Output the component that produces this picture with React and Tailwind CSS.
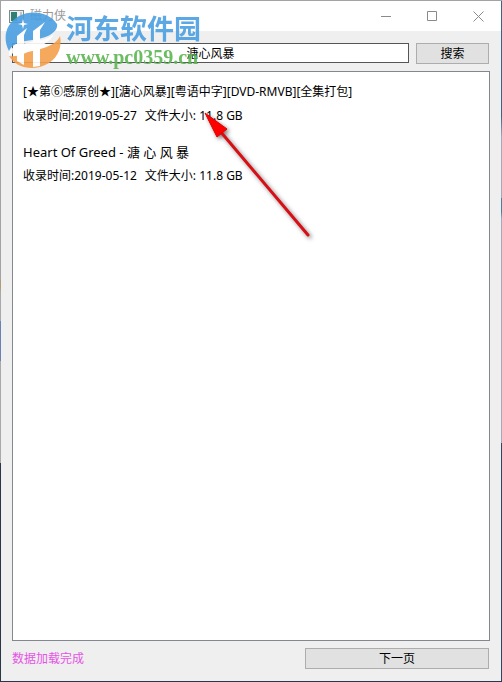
import { useState } from 'react';

const RESULTS = [
  { id: 1, title: '[★第⑥感原创★][溏心风暴][粤语中字][DVD-RMVB][全集打包]', titleClass: 'text-xs leading-6', date: '2019-05-27', size: '11.8 GB' },
  { id: 2, title: 'Heart Of Greed - 溏 心 风 暴', titleClass: 'text-[13px] leading-6', date: '2019-05-12', size: '11.8 GB' },
];

function AppIcon() {
  return (
    <svg width="15" height="13" viewBox="0 0 15 13" aria-hidden="true">
      <rect x="0.5" y="0.5" width="14" height="12" fill="#f0f0f0" stroke="#7f8a8a" />
      <rect x="2" y="2" width="6" height="9" fill="#2f7f74" />
      <rect x="11" y="2" width="2" height="9" fill="#c4c4c4" />
    </svg>
  );
}

function TitleBar() {
  return (
    <header className="flex h-[30px] shrink-0 items-center bg-white pl-2">
      <AppIcon />
      <h1 className="ml-1.5 text-xs text-[#999]">磁力侠</h1>
      <div className="ml-auto flex h-full text-[#8a8a8a]">
        <button aria-label="最小化" className="grid w-[46px] place-items-center">
          <svg width="11" height="11" fill="none" stroke="currentColor"><path d="M0 5.5h10" /></svg>
        </button>
        <button aria-label="最大化" className="grid w-[46px] place-items-center">
          <svg width="11" height="11" fill="none" stroke="currentColor"><path d="M.5.5h9v9h-9z" /></svg>
        </button>
        <button aria-label="关闭" className="grid w-[46px] place-items-center">
          <svg width="11" height="11" fill="none" stroke="currentColor"><path d="M.5.5l10 10M10.5.5l-10 10" /></svg>
        </button>
      </div>
    </header>
  );
}

function SiteLogo() {
  return (
    <svg width="60" height="58" viewBox="4 10 60 58" aria-hidden="true">
      {/* blue upper half */}
      <path d="M9 50C2 37 6 22 19 15c14-7 31-3 38 8 1 5-3 9-9 12-9 4-19 4-27 6-6 2-10 4-12 9z" fill="#4a9fe2" />
      {/* orange lower half */}
      <path d="M60 35c3 14-5 27-20 31-13 3-25-1-31-11 6 1 12-1 19-4 12-3 27-5 32-16z" fill="#f5a04c" />
      {/* the two slanted pillars and the bar between them */}
      <path d="M17 35l10-8-3 7v30l-7-4z" fill="#fff" />
      <path d="M33 30l12-9-5 8v36l-7 1z" fill="#fff" />
      <path d="M9 51c4-6 10-8 17-9 12-2 21-3 28-9-4 9-13 12-23 14-9 1-16 3-22 8z" fill="#fff" />
      <path d="M23 18l1 4 4 1-4 1-1 4-1-4-4-1 4-1z" fill="#fff" />
    </svg>
  );
}

// Site logo laid over the top left corner of the window
function Watermark() {
  return (
    <div className="pointer-events-none absolute top-2.5 left-1 flex items-start gap-0.5 opacity-90">
      <SiteLogo />
      <div className="flex flex-col">
        <span className="text-[27px] leading-9 font-bold text-[#4a9fe2]">河东软件园</span>
        <span className="font-[Liberation_Serif] text-xl leading-5 font-bold text-[#5db552]">www.pc0359.cn</span>
      </div>
    </div>
  );
}

function Arrow() {
  return (
    <svg
      className="pointer-events-none absolute top-[105px] left-[198px]"
      width="122" height="142" viewBox="198 105 122 142" aria-hidden="true"
    >
      <g className="drop-shadow-[2px_2px_2px_rgba(0,0,0,0.5)]">
        <path d="M220 130L308 234" stroke="#d80f14" strokeWidth="3" strokeLinecap="round" />
        <path d="M205 112l22 16-10 8z" fill="#f00" stroke="#d00" />
      </g>
    </svg>
  );
}

export default function App() {
  const [query, setQuery] = useState('溏心风暴');

  return (
    <div className="relative flex min-h-screen border-t border-b border-t-[#a3a3a3] border-b-[#2b3648] bg-[#efefef] font-['Noto_Sans','Noto_Sans_CJK_SC',sans-serif] text-xs text-black">
      {/* the desktop shows through along both sides of the window */}
      <div className="w-px shrink-0 bg-[linear-gradient(#a3a3a3_41%,#b09a78_41%_42%,#a9a9a9_43%_47%,#6b80b5_47%_53%,#a9a9a9_53%_68%,#2b3648_68%)]" />

      <div className="flex min-w-0 grow flex-col">
        <TitleBar />

        <main className="flex grow flex-col px-[11px] pt-3 pb-3">
          <form className="flex gap-[7px] pr-px" onSubmit={(e) => e.preventDefault()}>
            <input
              aria-label="关键词"
              value={query}
              onChange={(e) => setQuery(e.target.value)}
              className="h-5 min-w-0 grow border border-[#555] bg-white text-center outline-none"
            />
            <button className="h-[21px] w-[73px] border border-[#adadad] bg-[#e1e1e1]">搜索</button>
          </form>

          <ul className="mt-[7px] flex grow flex-col gap-3 border border-[#828790] bg-white px-2.5 py-2">
            {RESULTS.map((r) => (
              <li key={r.id}>
                <p className={r.titleClass}>{r.title}</p>
                <p className="flex gap-2 leading-6">
                  <span>收录时间:{r.date}</span>
                  <span>文件大小: {r.size}</span>
                </p>
              </li>
            ))}
          </ul>

          <footer className="mt-[7px] flex items-center justify-between pr-px">
            <p role="status" className="text-[#e653e6]">数据加载完成</p>
            <button className="h-[21px] w-[184px] border border-[#adadad] bg-[#e1e1e1]">下一页</button>
          </footer>
        </main>
      </div>

      <div className="w-px shrink-0 bg-[linear-gradient(#3f6385_17%,#a4a9ba_20%_29%,#4b7f9d_29%_31%,#a4a9ba_32%_65%,#2c4763_65%)]" />

      <Watermark />
      <Arrow />
    </div>
  );
}
